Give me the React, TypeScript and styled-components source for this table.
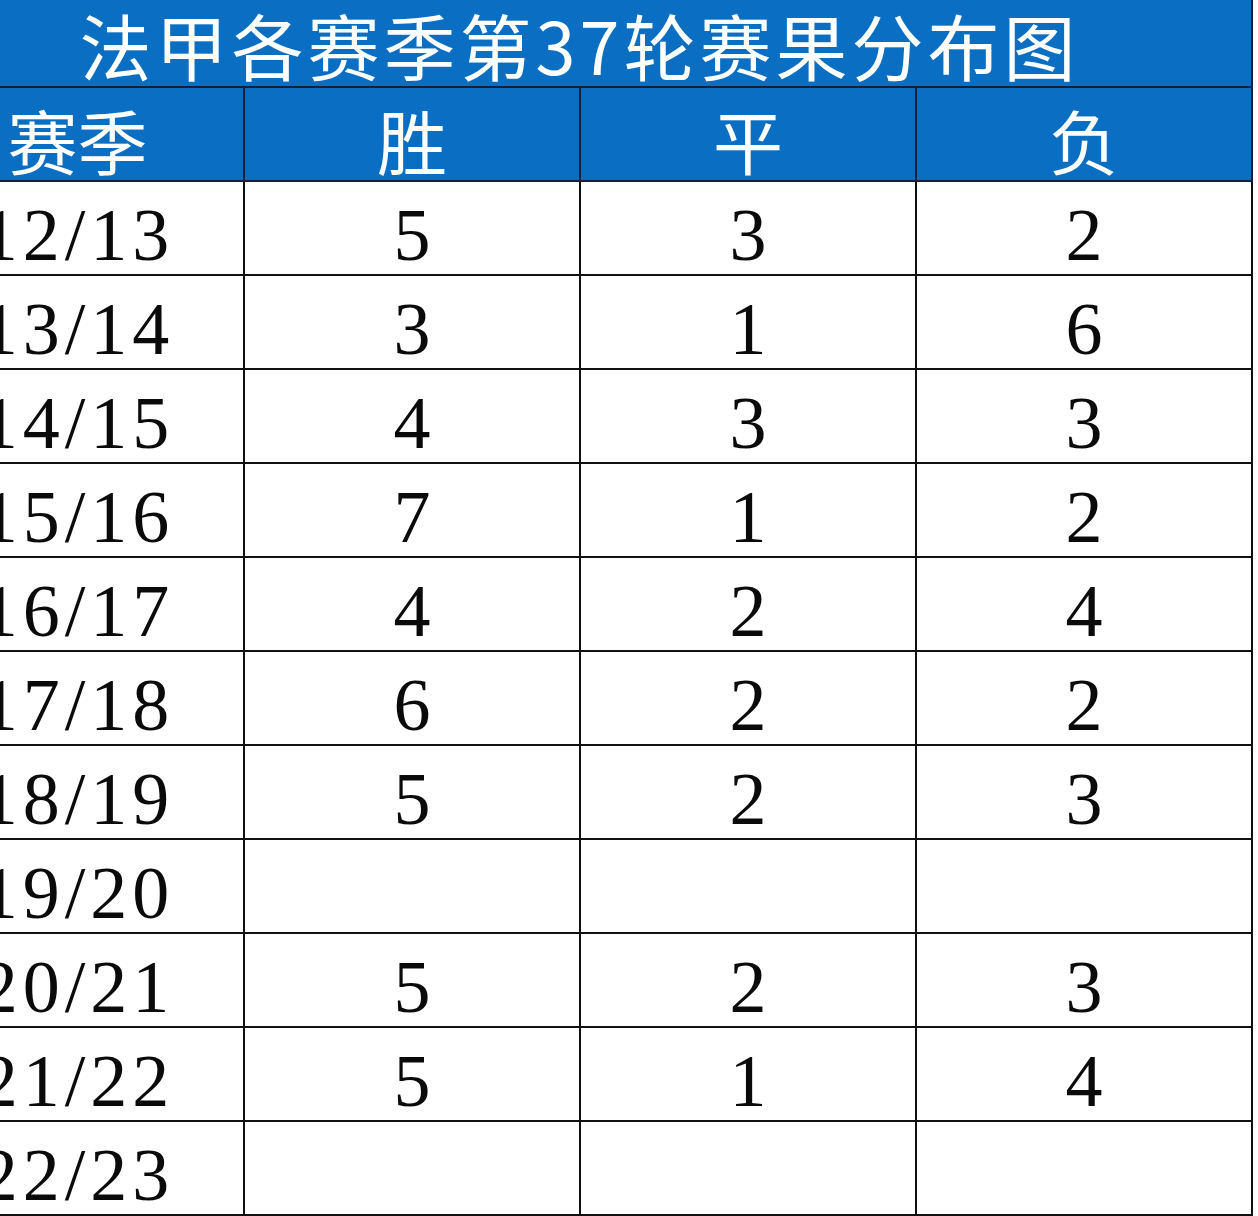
import React from "react";
import styled, { createGlobalStyle } from "styled-components";

const Global = createGlobalStyle`
  html, body { margin: 0; padding: 0; background: #ffffff; overflow: hidden; }
  body { width: 1258px; height: 1216px; }
`;

const Page = styled.div`
  width: 1258px;
  height: 1216px;
  overflow: hidden;
  background: #ffffff;
`;

const Sheet = styled.div`
  width: 1253px;
  display: flex;
  flex-direction: column;
`;

const TitleBar = styled.div`
  height: 88px;
  box-sizing: border-box;
  background: #0a6fc2;
  border-bottom: 2px solid #15213a;
  border-right: 2px solid #15213a;
  display: flex;
  align-items: center;
  justify-content: center;
  padding: 2px 92px 0 0;
  color: #ffffff;
  font-family: "Noto Sans CJK SC", "Liberation Serif", serif;
  font-size: 72px;
  letter-spacing: 4px;
  line-height: 1.1;
  white-space: nowrap;
`;

const Grid = styled.div`
  display: grid;
  grid-template-columns: 245px 336px 336px 336px;
  grid-auto-rows: 94px;
`;

const Cell = styled.div<{ $head?: boolean; $first?: boolean }>`
  box-sizing: border-box;
  min-width: 0;
  border-right: 2px solid ${(p) => (p.$head ? "#15213a" : "#111111")};
  border-bottom: 2px solid ${(p) => (p.$head ? "#15213a" : "#111111")};
  background: ${(p) => (p.$head ? "#0a6fc2" : "#ffffff")};
  color: ${(p) => (p.$head ? "#ffffff" : "#0a0a0a")};
  display: flex;
  align-items: center;
  justify-content: center;
  white-space: nowrap;
  padding-top: ${(p) => (p.$head ? "12px" : "14px")};
  padding-right: ${(p) => (p.$first ? "88px" : "0")};
  font-family: ${(p) =>
    p.$head
      ? '"Noto Sans CJK SC", "Liberation Serif", serif'
      : '"Liberation Serif", "DejaVu Serif", serif'};
  font-size: ${(p) => (p.$head ? "70px" : "74px")};
  letter-spacing: ${(p) => (p.$first && !p.$head ? "5px" : "0")};
  line-height: 1;
`;

const rows: [string, string, string, string][] = [
  ["12/13", "5", "3", "2"],
  ["13/14", "3", "1", "6"],
  ["14/15", "4", "3", "3"],
  ["15/16", "7", "1", "2"],
  ["16/17", "4", "2", "4"],
  ["17/18", "6", "2", "2"],
  ["18/19", "5", "2", "3"],
  ["19/20", "", "", ""],
  ["20/21", "5", "2", "3"],
  ["21/22", "5", "1", "4"],
  ["22/23", "", "", ""],
];

export default function App() {
  return (
    <Page>
      <Global />
      <Sheet>
        <TitleBar>法甲各赛季第37轮赛果分布图</TitleBar>
        <Grid>
          {["赛季", "胜", "平", "负"].map((h, i) => (
            <Cell $head $first={i === 0} key={h}>
              {h}
            </Cell>
          ))}
          {rows.map((r) =>
            r.map((v, i) => (
              <Cell $first={i === 0} key={r[0] + i}>
                {v}
              </Cell>
            ))
          )}
        </Grid>
      </Sheet>
    </Page>
  );
}
